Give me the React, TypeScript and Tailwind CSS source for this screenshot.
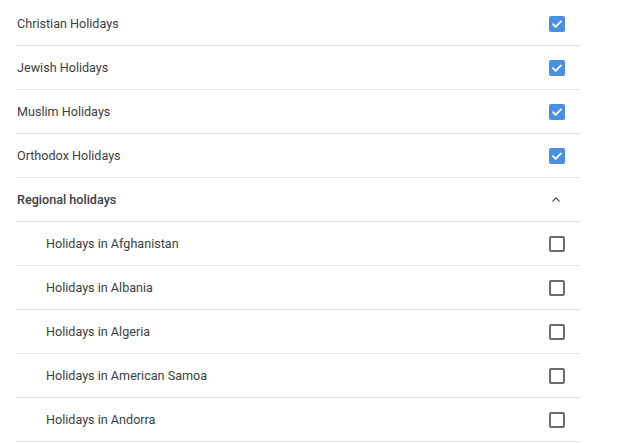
const main = [
  { label: 'Christian Holidays', checked: true },
  { label: 'Jewish Holidays', checked: true },
  { label: 'Muslim Holidays', checked: true },
  { label: 'Orthodox Holidays', checked: true },
];

const regional = [
  'Holidays in Afghanistan',
  'Holidays in Albania',
  'Holidays in Algeria',
  'Holidays in American Samoa',
  'Holidays in Andorra',
];

function Checkbox({ checked }: { checked: boolean }) {
  if (checked) {
    return (
      <span className="flex items-center justify-center size-4 rounded-[2px] bg-[#4a90e2]">
        <svg viewBox="0 0 16 16" className="size-4" fill="none">
          <path d="M4 8.2l2.6 2.6L12 5.4" stroke="white" strokeWidth="1.8" strokeLinecap="round" strokeLinejoin="round" />
        </svg>
      </span>
    );
  }
  return <span className="block size-4 rounded-[2px] border-2 border-[#6b6b6b]" />;
}

export default function App() {
  return (
    <div className="w-[625px] h-[444px] bg-white pl-[16px] pt-[2px] overflow-hidden" style={{ fontFamily: 'Roboto, "Noto Sans", sans-serif' }}>
      <div className="w-[563px]">
        {main.map((r) => (
          <div key={r.label} className="flex items-center justify-between h-[44px] border-b border-[#e0e0e0] pl-px pr-[14px]">
            <span className="pt-[2px] text-[12.6px] text-[#3c4043]">{r.label}</span>
            <Checkbox checked={r.checked} />
          </div>
        ))}
        <div className="flex items-center justify-between h-[44px] border-b border-[#e0e0e0] pl-px pr-[19px]">
          <span className="pt-[2px] text-[12.6px] font-medium text-[#3c4043]">Regional holidays</span>
          <svg viewBox="0 0 10 6" className="w-[8px] h-[5px]" fill="none">
            <path d="M1 5l4-4 4 4" stroke="#3c4043" strokeWidth="1.4" strokeLinecap="round" strokeLinejoin="round" />
          </svg>
        </div>
        {regional.map((label) => (
          <div key={label} className="flex items-center justify-between h-[44px] border-b border-[#e0e0e0] pl-[30px] pr-[14px]">
            <span className="pt-[2px] text-[12.6px] text-[#3c4043]">{label}</span>
            <Checkbox checked={false} />
          </div>
        ))}
      </div>
    </div>
  );
}
